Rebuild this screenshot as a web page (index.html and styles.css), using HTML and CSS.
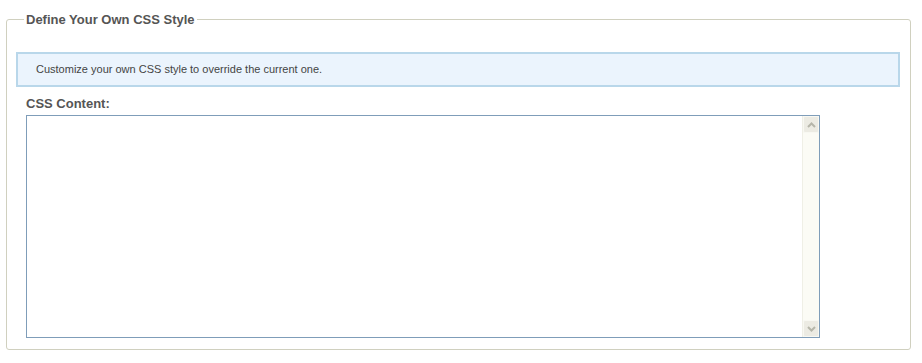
FILE: index.html
```
<!DOCTYPE html>
<html>

<head>
    <meta charset="utf-8">
    <title>Define Your Own CSS Style</title>
    <link rel="stylesheet" href="styles.css">
</head>

<body>
    <fieldset class="estilo">
        <legend class="estilo-titulo">Define Your Own CSS Style</legend>

        <div class="aviso">Customize your own CSS style to override the current one.</div>

        <div class="campo">
            <label class="campo-rotulo" for="css-conteudo">CSS Content:</label>
            <div class="editor">
                <textarea id="css-conteudo" class="editor-texto"></textarea>
                <div class="rolagem">
                    <span class="rolagem-botao">
                        <svg width="9" height="6" viewBox="0 0 9 6"><path d="M1 5 L4.5 1.5 L8 5" fill="none" stroke="#b6b6aa" stroke-width="2"/></svg>
                    </span>
                    <span class="rolagem-trilho"></span>
                    <span class="rolagem-botao">
                        <svg width="9" height="6" viewBox="0 0 9 6"><path d="M1 1 L4.5 4.5 L8 1" fill="none" stroke="#b6b6aa" stroke-width="2"/></svg>
                    </span>
                </div>
            </div>
        </div>
    </fieldset>
</body>

</html>
```

FILE: styles.css
```
* {
    font-family: "Liberation Sans", Arial, sans-serif;
    box-sizing: border-box;
}

body {
    margin: 0;
    padding: 12px 11px 0 6px;
    background-color: #ffffff;
}

.estilo {
    margin: 0;
    padding: 25px 10px 10px 9px;
    height: 338px;
    border: 1px solid #d0d0bf;
    border-radius: 3px;
}

.estilo-titulo {
    margin-left: 8px;
    padding: 0 2px;
    font-size: 13px;
    font-weight: bold;
    color: #555555;
}

.aviso {
    border: 2px solid #b9d7ea;
    background-color: #ebf4fd;
    padding: 9px 18px 10px;
    font-size: 11px;
    color: #444444;
}

.campo {
    padding: 9px 0 0 10px;
}

.campo-rotulo {
    display: block;
    font-size: 13px;
    font-weight: bold;
    color: #555555;
    margin-bottom: 4px;
}

.editor {
    display: flex;
    width: 794px;
    height: 223px;
    border: 1px solid #7f9db9;
}

.editor-texto {
    flex-grow: 1;
    border: 0;
    margin: 0;
    padding: 2px;
    resize: none;
    outline: none;
}

.rolagem {
    display: flex;
    flex-direction: column;
    width: 17px;
    background-color: #fbfbf5;
    border-left: 1px solid #efefe6;
}

.rolagem-botao {
    display: flex;
    align-items: center;
    justify-content: center;
    height: 17px;
    background-color: #ecebe3;
    border: 1px solid #f8f8f2;
    border-radius: 2px;
}

.rolagem-trilho {
    flex-grow: 1;
}
```
